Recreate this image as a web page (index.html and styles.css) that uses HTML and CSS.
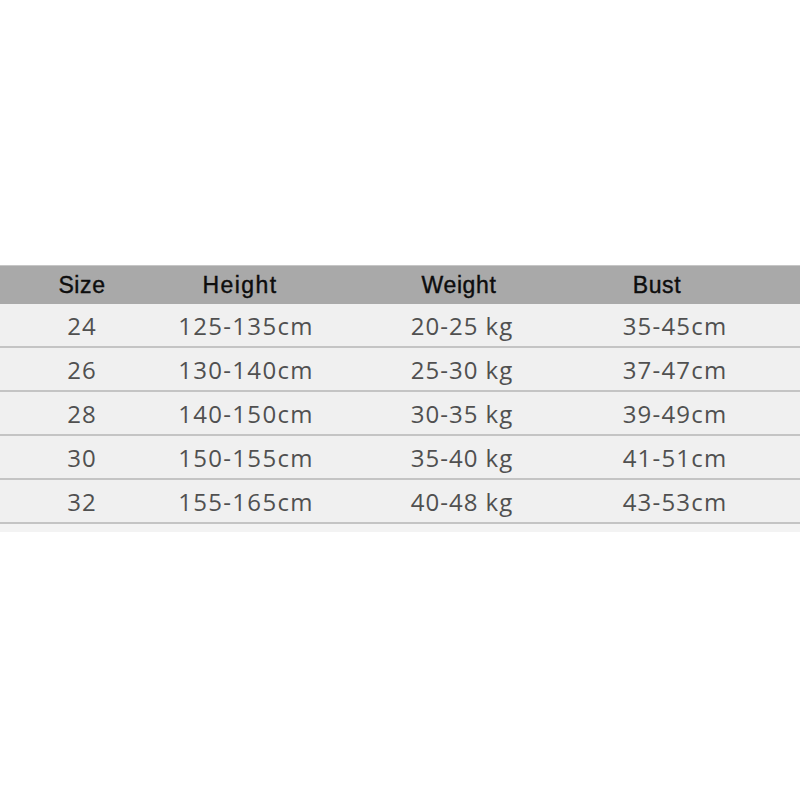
FILE: index.html
```html
<!DOCTYPE html>
<html>
<head>
<meta charset="utf-8">
<link rel="stylesheet" href="styles.css">
</head>
<body>
<div class="page">
  <div class="table">
    <div class="row head">
      <div class="c1">Size</div><div class="c2">Height</div><div class="c3">Weight</div><div class="c4">Bust</div>
    </div>
    <div class="row data">
      <div class="c1">24</div><div class="c2">125-135cm</div><div class="c3">20-25 kg</div><div class="c4">35-45cm</div>
    </div>
    <div class="row data">
      <div class="c1">26</div><div class="c2">130-140cm</div><div class="c3">25-30 kg</div><div class="c4">37-47cm</div>
    </div>
    <div class="row data">
      <div class="c1">28</div><div class="c2">140-150cm</div><div class="c3">30-35 kg</div><div class="c4">39-49cm</div>
    </div>
    <div class="row data">
      <div class="c1">30</div><div class="c2">150-155cm</div><div class="c3">35-40 kg</div><div class="c4">41-51cm</div>
    </div>
    <div class="row data">
      <div class="c1">32</div><div class="c2">155-165cm</div><div class="c3">40-48 kg</div><div class="c4">43-53cm</div>
    </div>
    <div class="tail"></div>
  </div>
</div>
</body>
</html>
```

FILE: styles.css
```css
html, body {
  margin: 0;
  padding: 0;
  background: #ffffff;
}
.page {
  width: 800px;
  height: 800px;
  padding-top: 265px;
  box-sizing: border-box;
}
.table {
  display: flex;
  flex-direction: column;
}
.row {
  display: grid;
  grid-template-columns: 164px 160px 276px 130px 70px;
  align-items: center;
  text-align: center;
}
.head {
  height: 38px;
  background: #a9a9a9;
  border-top: 1px solid #c6c6c6;
  font-family: "Liberation Sans", Arial, sans-serif;
  font-size: 23px;
  letter-spacing: 0.6px;
  color: #0d0d0d;
  -webkit-text-stroke: 0.4px #0d0d0d;
}
.head .c2 { letter-spacing: 1.4px; margin-left: -8px; }
.head .c3 { padding-right: 6px; }
.head .c4 { margin-left: -16px; }
.data {
  height: 42px;
  background: #f0f0f0;
  border-bottom: 2px solid #c4c4c4;
  font-family: "Open Sans", "Noto Sans", sans-serif;
  font-size: 24px;
  font-weight: 500;
  letter-spacing: 1px;
  color: #505050;
}
.data .c2 { letter-spacing: 1.3px; padding-left: 4px; }
.data .c4 { letter-spacing: 1.2px; padding-left: 20px; }
.tail {
  height: 8px;
  background: #f3f3f3;
}
```
